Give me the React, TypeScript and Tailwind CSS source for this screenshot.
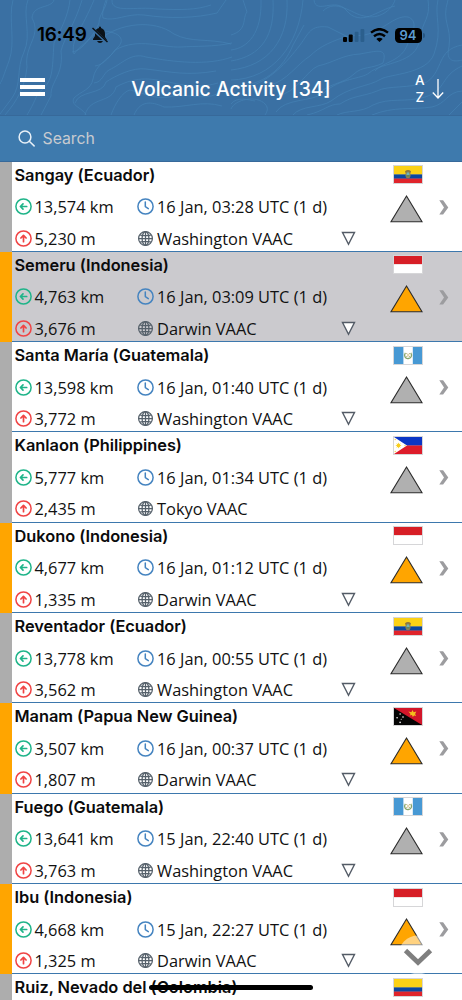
import React from "react";

type Country = "ec" | "id" | "gt" | "ph" | "pg" | "co";

interface Details {
  distance: string;
  height: string;
  time: string;
  vaac: string;
  plume: boolean;
}

interface Volcano {
  name: string;
  flag: Country;
  alert: boolean;
  selected?: boolean;
  details?: Details;
}

const volcanoes: Volcano[] = [
  { name: "Sangay (Ecuador)", flag: "ec", alert: false, details: { distance: "13,574 km", height: "5,230 m", time: "16 Jan, 03:28 UTC (1 d)", vaac: "Washington VAAC", plume: true } },
  { name: "Semeru (Indonesia)", flag: "id", alert: true, selected: true, details: { distance: "4,763 km", height: "3,676 m", time: "16 Jan, 03:09 UTC (1 d)", vaac: "Darwin VAAC", plume: true } },
  { name: "Santa María (Guatemala)", flag: "gt", alert: false, details: { distance: "13,598 km", height: "3,772 m", time: "16 Jan, 01:40 UTC (1 d)", vaac: "Washington VAAC", plume: true } },
  { name: "Kanlaon (Philippines)", flag: "ph", alert: false, details: { distance: "5,777 km", height: "2,435 m", time: "16 Jan, 01:34 UTC (1 d)", vaac: "Tokyo VAAC", plume: false } },
  { name: "Dukono (Indonesia)", flag: "id", alert: true, details: { distance: "4,677 km", height: "1,335 m", time: "16 Jan, 01:12 UTC (1 d)", vaac: "Darwin VAAC", plume: true } },
  { name: "Reventador (Ecuador)", flag: "ec", alert: false, details: { distance: "13,778 km", height: "3,562 m", time: "16 Jan, 00:55 UTC (1 d)", vaac: "Washington VAAC", plume: true } },
  { name: "Manam (Papua New Guinea)", flag: "pg", alert: true, details: { distance: "3,507 km", height: "1,807 m", time: "16 Jan, 00:37 UTC (1 d)", vaac: "Darwin VAAC", plume: true } },
  { name: "Fuego (Guatemala)", flag: "gt", alert: false, details: { distance: "13,641 km", height: "3,763 m", time: "15 Jan, 22:40 UTC (1 d)", vaac: "Washington VAAC", plume: true } },
  { name: "Ibu (Indonesia)", flag: "id", alert: true, details: { distance: "4,668 km", height: "1,325 m", time: "15 Jan, 22:27 UTC (1 d)", vaac: "Darwin VAAC", plume: true } },
  { name: "Ruiz, Nevado del (Colombia)", flag: "co", alert: false },
];

function Flag({ code }: { code: Country }) {
  return (
    <svg width="30" height="19" viewBox="0 0 30 19" className="block">
      <rect width="30" height="19" fill="#d6d6d8" />
      {(code === "ec" || code === "co") && (
        <g>
          <rect x="1" y="1" width="28" height="8.6" fill="#fbd116" />
          <rect x="1" y="9.4" width="28" height="4.4" fill="#0b47a0" />
          <rect x="1" y="13.6" width="28" height="4.4" fill="#e0242b" />
        </g>
      )}
      {code === "ec" && (
        <g>
          <path d="M12 6.2Q15 3.6 18 6.2L17.4 8h-4.8z" fill="#8a7440" />
          <ellipse cx="15" cy="9.8" rx="2.6" ry="3.5" fill="#8f8351" />
          <ellipse cx="15" cy="9.4" rx="1.5" ry="2.1" fill="#70b4b8" />
          <path d="M13.5 10.3h3v1.1h-3z" fill="#52733f" />
        </g>
      )}
      {code === "id" && (
        <g>
          <rect x="1" y="1" width="28" height="8.3" fill="#d71e26" />
          <rect x="1" y="9.3" width="28" height="8.7" fill="#fff" />
        </g>
      )}
      {code === "gt" && (
        <g>
          <rect x="1" y="1" width="28" height="17" fill="#4799d4" />
          <rect x="10.4" y="1" width="9.4" height="17" fill="#fff" />
          <path d="M12.4 6.8c-2 3 0 6 2.7 5.7 2.8.2 4.5-3 2.7-5.7" fill="none" stroke="#87a66c" strokeWidth="1.3" />
          <path d="M13.4 7.2l3.4 3.8m0-3.8-3.4 3.8" stroke="#aa9b5e" strokeWidth=".9" />
          <rect x="14" y="7.8" width="2.2" height="2.4" fill="#e1d8ae" />
        </g>
      )}
      {code === "ph" && (
        <g>
          <rect x="1" y="1" width="28" height="8.6" fill="#0b36c5" />
          <rect x="1" y="9.5" width="28" height="8.5" fill="#dd1c2a" />
          <path d="M1 1l13 8.5L1 18z" fill="#fff" />
          <circle cx="5.5" cy="9.5" r="1.9" fill="#f8ce20" />
          <path d="M5.5 6.8v5.4M2.8 9.5h5.4M3.6 7.6l3.8 3.8M3.6 11.4l3.8-3.8" stroke="#f8ce20" strokeWidth=".7" />
          <circle cx="2.2" cy="3.5" r=".7" fill="#f5d348" />
          <circle cx="2.2" cy="15.5" r=".7" fill="#f5d348" />
          <circle cx="12" cy="9.5" r=".7" fill="#f5d348" />
        </g>
      )}
      {code === "pg" && (
        <g>
          <rect x="1" y="1" width="28" height="17" fill="#d2162a" />
          <path d="M1 1v17h28z" fill="#050505" />
          <path d="M15.4 4.4l3 .8 1.1-2.3 1.2 2.3 2.6-.6-1.2 2.3 1 2-2-.4-1.3 1.4-.8-1.8-2.4.3 1-1.5z" fill="#f5c21c" />
          <g fill="#fff">
            <circle cx="7.1" cy="7" r=".7" />
            <circle cx="7.1" cy="15.4" r=".8" />
            <circle cx="4.1" cy="10.7" r=".8" />
            <circle cx="10" cy="10" r=".8" />
            <circle cx="8.2" cy="12.3" r=".5" />
          </g>
        </g>
      )}
    </svg>
  );
}

function ArrowCircle({ up }: { up?: boolean }) {
  return (
    <svg width="17" height="17" viewBox="0 0 17 17" fill="none" stroke={up ? "#f04444" : "#1fb489"} strokeWidth="1.5" strokeLinecap="round" strokeLinejoin="round" className="shrink-0">
      <circle cx="8.5" cy="8.5" r="7.6" />
      {up ? <path d="M8.5 11.7V5.6M5.9 8l2.6-2.6L11.1 8" strokeWidth="1.7" /> : <path d="M11.7 8.5H5.6M8 5.9L5.4 8.5 8 11.1" strokeWidth="1.7" />}
    </svg>
  );
}

function Clock() {
  return (
    <svg width="17" height="17" viewBox="0 0 17 17" fill="none" stroke="#4584c0" strokeWidth="1.5" strokeLinecap="round" strokeLinejoin="round" className="shrink-0">
      <circle cx="8.5" cy="8.5" r="7.6" />
      <path d="M8.3 4v4.6l3 2" />
    </svg>
  );
}

function Globe() {
  return (
    <svg width="17" height="17" viewBox="0 0 17 17" fill="none" stroke="#56616b" strokeWidth="1.25" className="shrink-0">
      <circle cx="8.5" cy="8.5" r="6.9" />
      <ellipse cx="8.5" cy="8.5" rx="3.4" ry="6.9" />
      <path d="M8.5 1.6v13.8M1.6 8.5h13.8M2.8 4.8q5.7 1.8 11.4 0M2.8 12.2q5.7-1.8 11.4 0" />
    </svg>
  );
}

function DetailLines({ d }: { d: Details }) {
  return (
    <>
      <div className="flex h-[32px] shrink-0 items-center">
        <div className="flex w-[122px] items-center gap-[3px] whitespace-nowrap"><ArrowCircle />{d.distance}</div>
        <div className="flex items-center gap-[3.5px] whitespace-nowrap"><Clock />{d.time}</div>
      </div>
      <div className="flex h-[31px] shrink-0 items-center">
        <div className="flex w-[122px] items-center gap-[3px] whitespace-nowrap"><ArrowCircle up />{d.height}</div>
        <div className="flex items-center gap-[3.5px] whitespace-nowrap"><Globe />{d.vaac}</div>
        {d.plume && (
          <svg width="15" height="15" viewBox="0 0 15 15" className="mr-[7.5px] ml-auto">
            <path d="M1.5 1.5h12l-6 11.8z" fill="#fff" stroke="#535b66" strokeWidth="1.4" />
          </svg>
        )}
      </div>
    </>
  );
}

function Row({ v }: { v: Volcano }) {
  return (
    <li className={`flex h-[90.33px] shrink-0 ${v.selected ? "bg-[#cbcace]" : "bg-white"}`}>
      <div className={`w-3 shrink-0 ${v.alert ? "bg-[#ffa500]" : "bg-[#adadad]"}`} />
      <div className="flex min-w-0 flex-1 border-b border-[#3d78ad]">
        <div className="flex w-[351px] shrink-0 flex-col pl-[2.5px] font-['Open_Sans','Noto_Sans',sans-serif] text-[16.4px] leading-[25px] text-[#111]">
          <h2 className="h-[29px] shrink-0 whitespace-nowrap pt-px font-['Inter',sans-serif] text-[16.38px] leading-6 font-semibold tracking-[-0.02px] text-[#0b0b0c]">{v.name}</h2>
          {v.details && <DetailLines d={v.details} />}
        </div>
        <div className="ml-[28px] flex w-8 shrink-0 flex-col items-center pt-[3.5px]">
          <div className="pl-[1px]"><Flag code={v.flag} /></div>
          <svg width="33" height="29" viewBox="0 0 33 29" className="mt-[10px] -ml-[2px] shrink-0">
            <path d="M16.5 2L32 27.8H1z" fill={v.alert ? "#ffa500" : "#b0b0b0"} stroke="#2b2b2b" strokeWidth="1.1" />
          </svg>
        </div>
        <svg width="10" height="15" viewBox="0 0 10 15" className="mt-[38px] ml-[16px]">
          <path d="M.3.3h3.8L9.3 7.4l-5.2 7.2H.3l4.7-7.2z" fill="#9c9c9f" />
        </svg>
      </div>
    </li>
  );
}

function Contours() {
  return (
    <svg viewBox="0 0 462 115" className="absolute inset-0 h-full w-full" fill="none" stroke="#4583b5" strokeOpacity=".65" strokeWidth="1">
      <path d="M13 0C8 18 16 42 9 61S3 78 0 84M28 0c-6 14 4 35-4 52s-2 32-12 46L0 114" />
      <path d="M54 0c-3 9-21 4-22 18 10 18-8 27-5 49-2 20-10 34-22 48M70 0c-2 16-8 27-16 43-2 27 0 39-16 50-5 12-8 17-11 22" />
      <path d="M82 0C75 24 64 38 61 51c3 24-11 31-10 45l-10 19M94 0C82 29 70 41 74 54c7-10 18-13 25-31 0-9 7-14 8-23" />
      <path d="M106 0c-3 8-4 15-3 18 12 4 24-5 41-3 26 4 52 3 73-2l9-13M112 0c-1 14 25 6 45 9 25 1 39 1 54-4M100 39c20-16 54-20 74-5 17 9 34 4 57 10" />
      <path d="M72 52c14-2 19-22 32-21 20 2 20 11 13 17-8 12-22 16-24 31-2 11-12 12-19 19-4 8 8 9 12 17" />
      <path d="M95 66c9-1 16-11 20-16 24-13 47-2 66-3 14-1 33 0 51-4M94 83c9-1 9-10 15-13 13-6 22-18 37-13 28 5 61 9 86 0" />
      <path d="M75 103c4-13 28-8 31-21 9-6 27-15 40-13 26 3 41 7 70 2M85 115c5-19 27-11 31-28 22-12 37-8 57-4 18 4 31 4 45 0" />
      <path d="M111 115c4-11 11-23 19-25 17 4 24 9 38 7 19-5 34 4 49-3M134 115c7-17 21-12 30-8 21 1 38-7 58-1" />
      <path d="M231 35c17-5 11-17 16-23l-4-12M231 50c17-2 31-17 30-50M231 61c31-5 44-26 42-61M231 70c38-4 58-31 56-70" />
      <path d="M231 80c42-1 68-35 72-80M231 87c33-1 52-18 62-42l11-20M248 87c22-6 39-25 52-42 9-12 10-20 28-18l22 11" />
      <path d="M314 0c2 15 21-3 32 10 15 18 31 0 49-4M323 11c13-13 29 3 41 5 15 4 28-6 31-16M270 85c17-4 27-21 40-29 10-10 22-15 41-21 26 5 41-21 57-18 9 3 7 13 0 26-6 19-24 18-33 28" />
      <path d="M277 96c20-3 30-26 41-30 17-4 24-11 42-12 17-3 28-7 23 9-11 6-21 3-29 11-10 10-26 9-37 21" />
      <path d="M276 112c9-14 36-10 48-19 15-15 38-14 45-20 14-12 48-8 51-35 2-16 11-20 8-38M293 115c8-10 28-7 38-14 19-15 37-14 50-22 9-5 46-5 53-25 9-25 0-38 4-54" />
      <path d="M307 115c18-4 21-11 33-11 14-9 22-7 37-13 11-6 33-2 50-9 17-12 9-32 35-37M337 115c10-5 24-2 36-10 17-8 32-2 52-8 22-7 15-21 37-31" />
      <path d="M372 115c22-9 40-5 60-8 14-3 15-15 30-16M449 115l13-13M448 0c-7 22 4 26 1 47-4 15 6 15 13 13M231 109c4-10 26-14 34-5 4 4 2 8 0 11M231 104c6-8 18-4 24-3" />
    </svg>
  );
}

function StatusBar() {
  return (
    <div className="relative flex h-[62px] shrink-0 items-center pt-[8px] pl-[37px] font-['Inter',sans-serif] text-black">
      <span className="w-[51px] text-[18.9px] leading-none font-semibold tracking-[-0.25px]">16:49</span>
      <svg width="18" height="18" viewBox="0 0 18 18" className="ml-[3px]">
        <path d="M8 1q1-1 2 0v1c3 1 4 3 4 6v3l2 3H2v-1l2-3V7q0-4 4-5zM6 15h6q-1 2-3 2t-3-2z" fill="#0b1218" />
        <path d="M1.5 3l14.5 13.5" stroke="#3b71a5" strokeWidth="2.8" />
        <path d="M1.5 2l15 14" stroke="#0b1218" strokeWidth="1.5" />
      </svg>
      <svg width="22" height="15" viewBox="0 0 22 15" className="ml-[233.5px] shrink-0">
        <rect x="0" y="9" width="4" height="5" rx="1" />
        <rect x="5.7" y="6.5" width="4" height="7.5" rx="1" />
        <rect x="11.7" y="3.8" width="3.8" height="10.2" rx="1" fill="#2b5f8d" />
        <rect x="17.5" y="1" width="3.8" height="13" rx="1" fill="#2b5f8d" />
      </svg>
      <svg width="19" height="14" viewBox="0 0 19 14" className="ml-[5.5px] shrink-0" fill="none" stroke="#000">
        <path d="M1 4.6Q9.5-2.3 18 4.6" strokeWidth="2.4" />
        <path d="M4 8.2q5.5-4.4 11 0" strokeWidth="2.4" />
        <path d="M6.3 11q3.2-2.4 6.4 0L9.5 14z" fill="#000" stroke="none" />
      </svg>
      <div className="ml-[5.5px] flex h-[15px] w-[27px] shrink-0 items-center justify-center rounded-[4.5px] bg-black text-[13px] leading-none font-semibold text-[#5b9bd0]">94</div>
      <div className="ml-px h-[5px] w-[2px] rounded-r bg-[#275783]" />
    </div>
  );
}

export default function App() {
  return (
    <div className="relative flex h-[1000px] w-[462px] flex-col overflow-hidden bg-white">
      <header className="relative flex h-[115px] shrink-0 flex-col bg-[#3a70a3]">
        <Contours />
        <StatusBar />
        <div className="relative flex h-[53px] pl-5">
          <div className="mt-4 flex h-[18px] w-[25px] flex-col justify-between">
            <span className="h-[4px] bg-white" />
            <span className="h-[4px] bg-white" />
            <span className="h-[4px] bg-white" />
          </div>
          <h1 className="mt-[14px] ml-[86px] w-[200px] text-center font-['Inter',sans-serif] text-[19.4px] leading-[26px] font-medium whitespace-nowrap text-white">Volcanic Activity [34]</h1>
          <div className="mt-[10px] ml-[84px] flex flex-col items-center font-['Inter',sans-serif] text-[13.5px] leading-[17px] font-medium text-white"><span>A</span><span>Z</span></div>
          <svg width="12" height="22" viewBox="0 0 12 22" fill="none" stroke="#fff" strokeWidth="1.3" className="mt-[16px] ml-[7px]">
            <path d="M6 1v19M.8 14.5L6 20l5.2-5.5" />
          </svg>
        </div>
      </header>
      <div className="flex h-[46.5px] shrink-0 items-center border-y border-[#37699a] bg-[#3e7aad] pl-[18px]">
        <svg width="17" height="17" viewBox="0 0 17 17" fill="none" stroke="#e8f0f7" strokeWidth="1.5" strokeLinecap="round">
          <circle cx="7" cy="7" r="5.9" />
          <path d="M11.3 11.3l4.8 4.6" />
        </svg>
        <span className="ml-[7.5px] pt-px font-['Inter',sans-serif] text-[15.8px] leading-5 text-[#c8cbd0]">Search</span>
      </div>
      <ul className="flex h-[838.5px] flex-col overflow-hidden">
        {volcanoes.map((v) => <Row key={v.name} v={v} />)}
      </ul>
      <div className="absolute top-[984.5px] left-[149px] h-[5.5px] w-[164px] rounded-full bg-black" />
      <svg width="40" height="40" viewBox="0 0 40 40" className="absolute top-[935px] left-[398px]">
        <circle cx="20" cy="20" r="19.5" fill="#fff" fillOpacity=".5" />
        <path d="M7.5 15.5L20 27.5l12.5-12" fill="none" stroke="#7f7f7f" strokeWidth="4.8" />
      </svg>
    </div>
  );
}
